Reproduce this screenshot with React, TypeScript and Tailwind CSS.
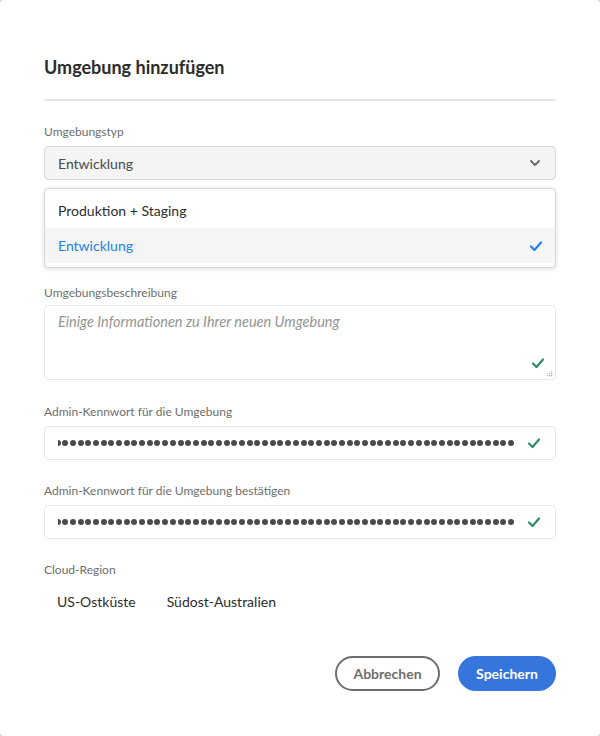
import React from "react";

const font = { fontFamily: "Lato, 'Noto Sans', sans-serif" };

function Check({ color, size = 14 }: { color: string; size?: number }) {
  return (
    <svg width={size} height={size} viewBox="0 0 14 14" fill="none">
      <path d="M2 7.5 L5.5 11 L12 3.5" stroke={color} strokeWidth="2.2" strokeLinecap="round" strokeLinejoin="round" />
    </svg>
  );
}

function Dots() {
  const dots = Array.from({ length: 60 });
  return (
    <div className="flex-1 overflow-hidden h-[8px] relative">
      <div className="flex items-center gap-[1.7px] absolute left-[-3.5px] top-[1px]">
        {dots.map((_, i) => (
          <div key={i} className="w-[6px] h-[6px] rounded-full bg-[#4b4b4b] shrink-0" />
        ))}
      </div>
    </div>
  );
}

function Label({ children }: { children: React.ReactNode }) {
  return <div className="text-[12px] leading-[16px] text-[#6e6e6e]">{children}</div>;
}

export default function App() {
  return (
    <div className="w-[600px] h-[736px] bg-[#d8d8d8]" style={font}>
      <div className="w-full h-full bg-white rounded-[4px] px-[44px] pt-[56px] flex flex-col">
        <h1 className="text-[18px] leading-[22px] font-bold text-[#2c2c2c]">Umgebung hinzufügen</h1>
        <div className="mt-[21px] h-[2px] bg-[#e6e6e6]" />

        <div className="mt-[23px]">
          <Label>Umgebungstyp</Label>
          <div className="relative mt-[6px]">
            <div className="h-[34px] rounded-[4px] border border-[#d8d8d8] bg-[#f4f4f4] flex items-center pl-[13px] pr-[12px]">
              <span className="flex-1 text-[14px] text-[#4b4b4b]">Entwicklung</span>
              <svg width="12" height="8" viewBox="0 0 12 8" fill="none" className="mr-[2px]">
                <path d="M2 2 L6 6 L10 2" stroke="#6e6e6e" strokeWidth="2" strokeLinecap="round" strokeLinejoin="round" />
              </svg>
            </div>
            <div className="absolute left-0 right-0 top-[42px] h-[80px] bg-white rounded-[4px] border border-[#d8d8d8] shadow-[0_1px_4px_rgba(0,0,0,0.15)] py-[4px] z-10">
              <div className="h-[35px] flex items-center pl-[13px] text-[14px] text-[#2c2c2c]">Produktion + Staging</div>
              <div className="h-[35px] flex items-center pl-[13px] pr-[12px] bg-[#f5f5f5]">
                <span className="flex-1 text-[14px] text-[#2680eb]">Entwicklung</span>
                <Check color="#2680eb" size={14} />
              </div>
            </div>
            <div className="h-[104px]" />
          </div>
        </div>

        <div className="mt-[1px]">
          <Label>Umgebungsbeschreibung</Label>
          <div className="mt-[4px] h-[75px] rounded-[4px] border border-[#e6e6e6] relative px-[13px] pt-[3px]">
            <span className="text-[14.5px] italic text-[#959595]">Einige Informationen zu Ihrer neuen Umgebung</span>
            <div className="absolute right-[10px] bottom-[9px]">
              <Check color="#2d8a6a" size={14} />
            </div>
            <svg width="7" height="7" viewBox="0 0 7 7" className="absolute right-[2px] bottom-[2px]">
              <rect x="5" y="1" width="1.3" height="1.3" fill="#b3b3b3" />
              <rect x="3" y="3" width="1.3" height="1.3" fill="#b3b3b3" />
              <rect x="5" y="3" width="1.3" height="1.3" fill="#b3b3b3" />
              <rect x="1" y="5" width="1.3" height="1.3" fill="#b3b3b3" />
              <rect x="3" y="5" width="1.3" height="1.3" fill="#b3b3b3" />
              <rect x="5" y="5" width="1.3" height="1.3" fill="#b3b3b3" />
            </svg>
          </div>
        </div>

        <div className="mt-[24px]">
          <Label>Admin-Kennwort für die Umgebung</Label>
          <div className="mt-[6px] h-[34px] rounded-[4px] border border-[#e6e6e6] flex items-center pl-[13px] pr-[14px] gap-[12px]">
            <Dots />
            <Check color="#2d8a6a" size={14} />
          </div>
        </div>

        <div className="mt-[23px]">
          <Label>Admin-Kennwort für die Umgebung bestätigen</Label>
          <div className="mt-[6px] h-[34px] rounded-[4px] border border-[#e6e6e6] flex items-center pl-[13px] pr-[14px] gap-[12px]">
            <Dots />
            <Check color="#2d8a6a" size={14} />
          </div>
        </div>

        <div className="mt-[23px]">
          <Label>Cloud-Region</Label>
          <div className="mt-[7px] h-[32px] flex items-center gap-[31px] pl-[13px] text-[14px] text-[#2c2c2c]">
            <span>US-Ostküste</span>
            <span>Südost-Australien</span>
          </div>
        </div>

        <div className="mt-[39px] flex justify-end gap-[18px]">
          <button className="h-[35px] w-[105px] rounded-full border-2 border-[#6e6e6e] text-[14px] font-bold text-[#6e6e6e] bg-white">Abbrechen</button>
          <button className="h-[35px] w-[98px] rounded-full bg-[#3575dc] text-[14px] font-bold text-white">Speichern</button>
        </div>
      </div>
    </div>
  );
}
